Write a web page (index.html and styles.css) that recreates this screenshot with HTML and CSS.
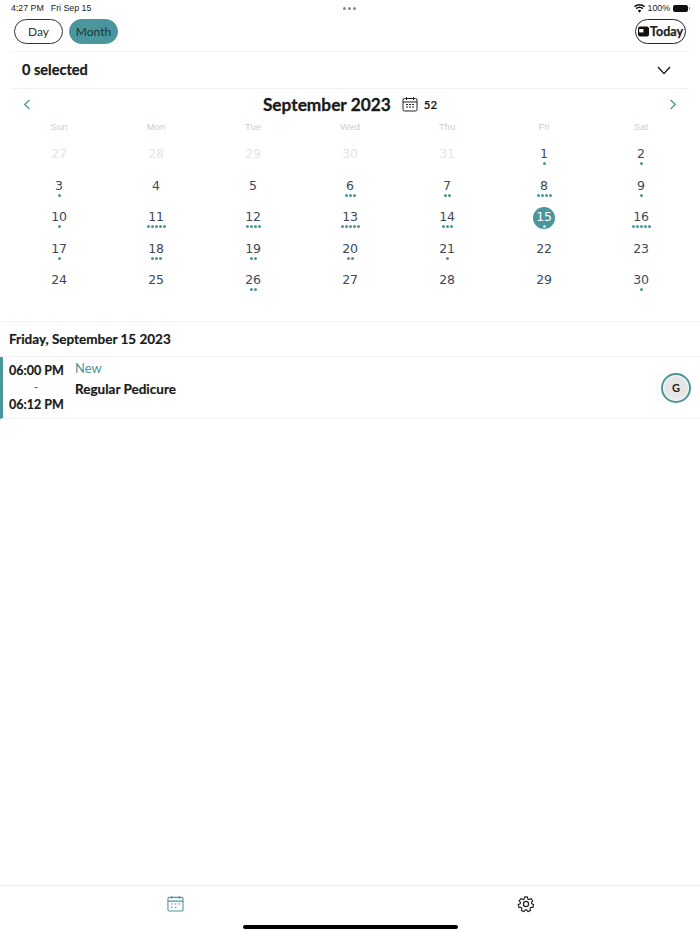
FILE: index.html
```html
<!DOCTYPE html>
<html lang="en">
<head>
<meta charset="utf-8">
<title>Calendar</title>
<link rel="stylesheet" href="styles.css">
</head>
<body>
<div class="app">
  <div class="status">
    <span class="status-time">4:27 PM</span><span class="status-date">Fri Sep 15</span>
    <span class="status-dots"><i></i><i></i><i></i></span>
    <span class="status-right">
      <svg class="wifi" width="11" height="9" viewBox="0 0 16 12"><path d="M8 12 5.400 8.900a4 4 0 0 1 5.200 0zM3.900 7.200 2.400 5.400a8.600 8.600 0 0 1 11.200 0l-1.500 1.800a6.300 6.300 0 0 0-8.200 0zM1.400 4.200 0 2.500a12.400 12.400 0 0 1 16 0l-1.400 1.700a10.200 10.200 0 0 0-13.200 0z" fill="#111"/></svg>
      <span>100%</span>
      <span class="battery"></span><span class="battery-tip"></span>
    </span>
  </div>
  <div class="toolbar">
    <span class="pill">Day</span>
    <span class="pill pill-on">Month</span>
    <span class="today">
      <svg width="11" height="11" viewBox="0 0 11 11"><rect x="0" y="0.500" width="11" height="10" rx="2" fill="#111"/><rect x="1.200" y="3" width="4.200" height="3.400" fill="#fff"/></svg>
      Today
    </span>
  </div>
  <div class="selected">
    <span class="selected-label">0 selected</span>
    <svg width="14" height="9" viewBox="0 0 14 9"><path d="M1 1l6 6.600L13 1" fill="none" stroke="#111" stroke-width="1.300"/></svg>
  </div>
  <div class="month-head">
    <svg width="8" height="11" viewBox="0 0 8 11"><path d="M6.500 1 1.700 5.500l4.800 4.500" fill="none" stroke="#4b959c" stroke-width="1.300"/></svg>
    <div class="month-title">
      <span class="month-name">September 2023</span>
      <svg width="16" height="16" viewBox="0 0 16 16" fill="none" stroke="#222" stroke-width="1"><rect x="1" y="2.500" width="14" height="12.500" rx="1.500"/><path d="M1 6h14M4.500 1v3M11.500 1v3"/><path d="M4 8.500h2M7 8.500h2M10 8.500h2M4 11h2M7 11h2M10 11h2"/></svg>
      <span class="month-count">52</span>
    </div>
    <svg width="8" height="11" viewBox="0 0 8 11"><path d="M1.500 1l4.800 4.500L1.500 10" fill="none" stroke="#4b959c" stroke-width="1.300"/></svg>
  </div>
  <div class="weekdays">
    <span>Sun</span><span>Mon</span><span>Tue</span><span>Wed</span><span>Thu</span><span>Fri</span><span>Sat</span>
  </div>
  <div class="days" id="days"></div>
  <div class="day-heading">Friday, September 15 2023</div>
  <div class="event">
    <div class="times">
      <span>06:00 PM</span>
      <span class="dash">-</span>
      <span>06:12 PM</span>
    </div>
    <div class="info">
      <span class="state">New</span>
      <span class="service">Regular Pedicure</span>
    </div>
    <div class="avatar-wrap"><span class="avatar-rule"></span><span class="avatar">G</span></div>
  </div>
  <div class="spacer"></div>
  <div class="tabs">
    <div class="tab tab-first">
      <svg width="17" height="17" viewBox="0 0 18 18" fill="none" stroke="#4b959c" stroke-width="1.100"><rect x="1" y="2.500" width="16" height="14.500" rx="1.500"/><path d="M1 6.500h16M5 1v3M13 1v3"/><path d="M4 9.500h2M8 9.500h2M12 9.500h2M4 13h2M8 13h2" stroke-width="1.200"/></svg>
    </div>
    <div class="tab">
      <svg width="18" height="18" viewBox="0 0 24 24" fill="none" stroke="#222" stroke-width="1.700" stroke-linejoin="round"><circle cx="12" cy="12" r="3.400"/><path d="M10 1.500h4l.7 3.100 1.900.9 2.800-1.500 2.600 3.200-2 2.400.4 2 2.900 1.300-.9 4-3.200-.1-1.300 1.600.7 3.100-3.700 1.800-2-2.500h-2l-2 2.500-3.700-1.800.7-3.100-1.300-1.600-3.200.1-.9-4 2.900-1.300.4-2-2-2.400L4.600 4l2.800 1.500 1.900-.9z" transform="translate(1.200 1.200) scale(.9)"/></svg>
    </div>
  </div>
  <div class="home"><span></span></div>
</div>
<script src="calendar.js"></script>
</body>
</html>
```

FILE: calendar.js
```js
var cells = [
  [27,0,1],[28,0,1],[29,0,1],[30,0,1],[31,0,1],[1,1],[2,1],
  [3,1],[4,0],[5,0],[6,3],[7,2],[8,4],[9,1],
  [10,1],[11,5],[12,4],[13,5],[14,3],[15,1,0,1],[16,5],
  [17,1],[18,3],[19,2],[20,2],[21,1],[22,0],[23,0],
  [24,0],[25,0],[26,2],[27,0],[28,0],[29,0],[30,1]
];
var root = document.getElementById('days');
cells.forEach(function (c) {
  var cell = document.createElement('div');
  cell.className = 'day' + (c[2] ? ' day-out' : '') + (c[3] ? ' day-on' : '');
  var num = document.createElement('span');
  num.className = 'num';
  num.textContent = c[0];
  cell.appendChild(num);
  var dots = document.createElement('span');
  dots.className = 'dots';
  for (var i = 0; i < c[1]; i++) dots.appendChild(document.createElement('i'));
  cell.appendChild(dots);
  root.appendChild(cell);
});
```

FILE: styles.css
```css
* { box-sizing: border-box; }
html, body { margin: 0; padding: 0; }
body { background: #fff; color: #111; font-family: Lato, "Noto Sans", sans-serif; }
.app { width: 700px; height: 934px; display: flex; flex-direction: column; overflow: hidden; }

.status { height: 19px; padding: 0 10px 3px 11px; display: flex; align-items: center; font: 8.800px/12px "Liberation Sans", sans-serif; color: #222; position: relative; }
.status-date { margin-left: 7px; }
.status-dots { position: absolute; left: 343px; top: 7px; display: flex; gap: 2px; }
.status-dots i { width: 3px; height: 3px; border-radius: 50%; background: #8a8a8a; }
.status-right { margin-left: auto; display: flex; align-items: center; gap: 3px; }
.battery { width: 15px; height: 7px; background: #111; border-radius: 2px; margin-right: -2px; }
.battery-tip { width: 1px; height: 3px; background: #999; }

.toolbar { height: 32px; margin: 0 14px; padding-bottom: 7px; display: flex; align-items: center; gap: 6px; }
.pill { width: 49px; height: 25px; border: 1px solid #333; border-radius: 13px; display: flex; align-items: center; justify-content: center; font-size: 12px; color: #333; }
.pill-on { background: #4b959c; border-color: #4b959c; color: #17353a; }
.today { margin-left: auto; width: 51px; height: 25px; border: 1px solid #222; border-radius: 13px; display: flex; align-items: center; justify-content: center; gap: 1px; font-size: 12.500px; font-weight: 700; color: #222; -webkit-text-stroke: .25px #222; }

.selected { height: 38px; margin: 0 11px; padding: 0 18px 0 11px; border-top: 1px solid #f3f3f3; border-bottom: 1px solid #f3f3f3; display: flex; align-items: center; justify-content: space-between; font-size: 14.500px; font-weight: 700; color: #1a1a1a; }
.selected-label { margin-top: -2px; -webkit-text-stroke: .25px #1a1a1a; }

.month-head { height: 30px; margin-left: 23px; padding-right: 23px; display: flex; align-items: center; justify-content: space-between; }
.month-title { display: flex; align-items: center; }
.month-name { font-size: 17.300px; font-weight: 700; color: #1a1a1a; -webkit-text-stroke: .3px #1a1a1a; }
.month-title svg { margin-left: 11px; }
.month-count { margin-left: 6px; font-size: 11.500px; font-weight: 700; color: #1a1a1a; }

.weekdays { margin: 0 10.500px; height: 15px; display: grid; grid-template-columns: repeat(7, 97px); font: 9.500px/15px "Liberation Sans", sans-serif; color: #c9ced8; text-align: center; }

.days { margin: 2.500px 10.500px 0; height: 184.500px; display: grid; grid-template-columns: repeat(7, 97px); grid-auto-rows: 31.500px; align-content: start; }
.day { position: relative; display: flex; flex-direction: column; align-items: center; }
.num { margin-top: 7px; width: 22px; height: 22px; border-radius: 50%; display: flex; align-items: center; justify-content: center; font: 12.500px/1 "DejaVu Sans", sans-serif; letter-spacing: -.2px; color: #3c4a5a; position: relative; }
.day-out .num { color: #e2e5ea; }
.day-on .num { background: #4b959c; color: #fff; }
.dots { position: absolute; top: 25.500px; display: flex; gap: 1px; }
.dots i { width: 3px; height: 3px; border-radius: 50%; background: #4b959c; }
.day-on .dots i { background: #cfe4e6; }

.day-heading { height: 36px; padding: 0 9px; border-top: 1px solid #f3f3f3; border-bottom: 1px solid #f3f3f3; display: flex; align-items: center; font-size: 13.500px; font-weight: 700; color: #1a1a1a; -webkit-text-stroke: .2px #1a1a1a; }

.event { height: 62px; border-left: 3px solid #4b959c; border-bottom: 1px solid #f3f3f3; display: flex; align-items: stretch; }
.times { width: 66px; padding: 5px 0 0 6px; display: flex; flex-direction: column; font-size: 12.500px; line-height: 17px; font-weight: 700; color: #1a1a1a; -webkit-text-stroke: .2px #1a1a1a; }
.dash { font-weight: 400; color: #666; text-align: center; width: 54px; -webkit-text-stroke: 0; }
.info { padding: 2px 0 0 6px; display: flex; flex-direction: column; flex: 1; }
.state { font-size: 13px; line-height: 18px; color: #4b959c; }
.service { margin-top: 3px; font-size: 13.500px; line-height: 18px; font-weight: 700; color: #1a1a1a; -webkit-text-stroke: .2px #1a1a1a; }
.avatar-wrap { width: 43px; display: flex; align-items: center; gap: 3px; }
.avatar-rule { width: 1px; height: 30px; background: #f3f3f3; }
.avatar { width: 30px; height: 30px; border-radius: 50%; border: 2px solid #4b959c; background: #e6e6e6; box-shadow: inset 0 0 0 1px #fff; display: flex; align-items: center; justify-content: center; font-size: 11px; font-weight: 700; color: #222; }

.spacer { flex: 1; }
.tabs { height: 40px; border-top: 1px solid #eee; display: flex; padding-top: 9px; }
.tab { width: 350px; display: flex; justify-content: center; }
.tab-first { width: 352px; }
.home { height: 9px; display: flex; justify-content: center; padding-left: 1px; }
.home span { width: 215px; height: 4px; border-radius: 2px; background: #000; }
```
